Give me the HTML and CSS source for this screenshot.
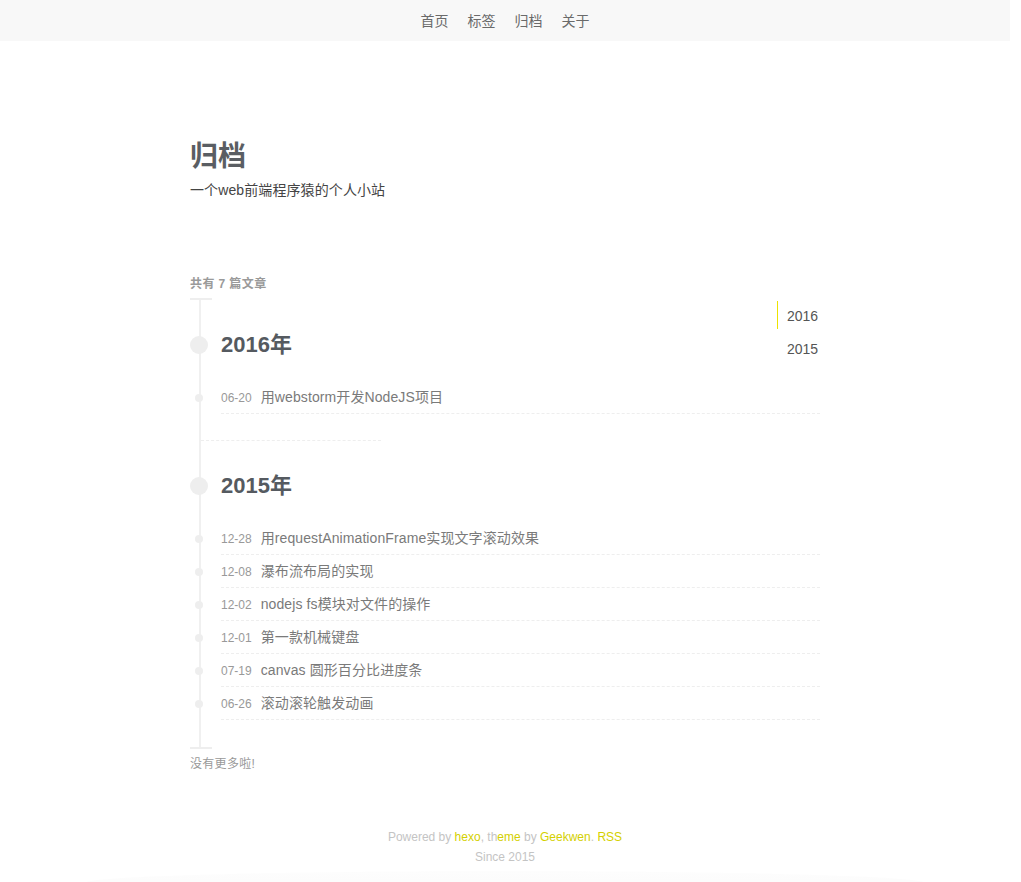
FILE: index.html
```html
<!DOCTYPE html>
<html lang="zh-CN">
<head>
<meta charset="utf-8">
<title>归档</title>
<link rel="stylesheet" href="styles.css">
</head>
<body>
<div class="page">
  <header class="topbar">
    <nav class="menu">
      <a href="#">首页</a>
      <a href="#">标签</a>
      <a href="#">归档</a>
      <a href="#">关于</a>
    </nav>
  </header>

  <main class="main">
    <div class="intro">
      <h1 class="title">归档</h1>
      <p class="subtitle">一个web前端程序猿的个人小站</p>
    </div>

    <div class="archive">
      <div class="count">共有 7 篇文章</div>
      <div class="cap"></div>
      <div class="timeline">
        <section class="year">
          <h2 class="year-title">2016年</h2>
          <ul class="posts">
            <li class="post"><span class="date">06-20</span><a class="post-title" href="#">用webstorm开发NodeJS项目</a></li>
          </ul>
        </section>
        <div class="sep"></div>
        <section class="year">
          <h2 class="year-title">2015年</h2>
          <ul class="posts">
            <li class="post"><span class="date">12-28</span><a class="post-title" href="#">用requestAnimationFrame实现文字滚动效果</a></li>
            <li class="post"><span class="date">12-08</span><a class="post-title" href="#">瀑布流布局的实现</a></li>
            <li class="post"><span class="date">12-02</span><a class="post-title" href="#">nodejs fs模块对文件的操作</a></li>
            <li class="post"><span class="date">12-01</span><a class="post-title" href="#">第一款机械键盘</a></li>
            <li class="post"><span class="date">07-19</span><a class="post-title" href="#">canvas 圆形百分比进度条</a></li>
            <li class="post"><span class="date">06-26</span><a class="post-title" href="#">滚动滚轮触发动画</a></li>
          </ul>
        </section>
      </div>
      <div class="cap"></div>
      <div class="nomore">没有更多啦!</div>

      <ul class="year-nav">
        <li class="active"><a href="#">2016</a></li>
        <li><a href="#">2015</a></li>
      </ul>
    </div>
  </main>

  <footer class="footer">
    <p>Powered by <a href="#">hexo</a>, th<a href="#">eme</a> by <a href="#">Geekwen</a>. <a href="#">RSS</a></p>
    <p>Since 2015</p>
    <div class="shade"></div>
  </footer>
</div>
</body>
</html>
```

FILE: styles.css
```css
html, body {
  margin: 0;
  padding: 0;
  background: #fff;
}
body {
  font-family: "Liberation Sans", "Noto Sans CJK SC", sans-serif;
  color: #555;
}
a { text-decoration: none; color: inherit; }
ul { list-style: none; margin: 0; padding: 0; }
p, h1, h2 { margin: 0; }

.page {
  width: 1010px;
  overflow: hidden;
}

.topbar {
  height: 41px;
  background: #f8f8f8;
  display: flex;
  justify-content: center;
  align-items: center;
}
.menu {
  display: flex;
  gap: 19px;
  font-size: 14px;
  line-height: 20px;
  color: #6a6a6a;
}

.main {
  width: 630px;
  margin: 0 auto;
}

.intro {
  padding-top: 98px;
}
.title {
  font-size: 28px;
  line-height: 36px;
  font-weight: 700;
  color: #5a5e63;
}
.subtitle {
  margin-top: 5px;
  font-size: 14px;
  line-height: 20px;
  color: #444;
  letter-spacing: 0.1px;
}

.archive {
  position: relative;
  margin-top: 74px;
}
.count {
  font-size: 12px;
  line-height: 20px;
  color: #9a9a9a;
  font-weight: 600;
  letter-spacing: 0.4px;
}
.cap {
  width: 22px;
  height: 2px;
  background: #eee;
  margin-top: 4px;
}
.timeline {
  margin-left: 9px;
  border-left: 2px solid #f0f0f0;
  padding-bottom: 27px;
}
.year {
  padding-left: 20px;
}
.year-title {
  position: relative;
  padding-top: 25px;
  font-size: 22px;
  line-height: 40px;
  font-weight: 700;
  color: #555a60;
}
.year-title::before {
  content: "";
  position: absolute;
  left: -31px;
  top: 36px;
  width: 18px;
  height: 18px;
  border-radius: 50%;
  background: #eee;
}
.posts {
  margin-top: 16px;
}
.post {
  position: relative;
  display: flex;
  align-items: baseline;
  height: 32px;
  line-height: 33px;
  border-bottom: 1px dashed #eee;
}
.post::before {
  content: "";
  position: absolute;
  left: -26px;
  top: 13px;
  width: 8px;
  height: 8px;
  border-radius: 50%;
  background: #eee;
}
.date {
  font-size: 12px;
  color: #999;
  margin-right: 9px;
}
.post-title {
  font-size: 14px;
  color: #7a7a7a;
  letter-spacing: 0.1px;
}
.sep {
  margin-top: 26px;
  width: 180px;
  border-top: 1px dashed #eee;
}
.timeline + .cap {
  margin-top: 0;
}
.nomore {
  margin-top: 5px;
  font-size: 12px;
  line-height: 20px;
  color: #999;
  letter-spacing: 0.3px;
}

.year-nav {
  position: absolute;
  right: 0;
  top: 27px;
  width: 43px;
  font-size: 14px;
  color: #555;
}
.year-nav li {
  height: 28px;
  line-height: 30px;
  padding-left: 9px;
  border-left: 1px solid transparent;
  margin-bottom: 5px;
}
.year-nav li.active {
  border-left-color: #ece300;
}

.footer {
  margin-top: 53px;
  text-align: center;
  font-size: 12px;
  line-height: 20px;
  color: #c4c4c4;
}
.footer a {
  color: #d4d000;
}
.shade {
  margin: 4px auto 0;
  width: 840px;
  height: 20px;
  border-radius: 50% 50% 0 0 / 12px 12px 0 0;
  background: linear-gradient(#fdfdfd, #fbfbfb);
}
```
